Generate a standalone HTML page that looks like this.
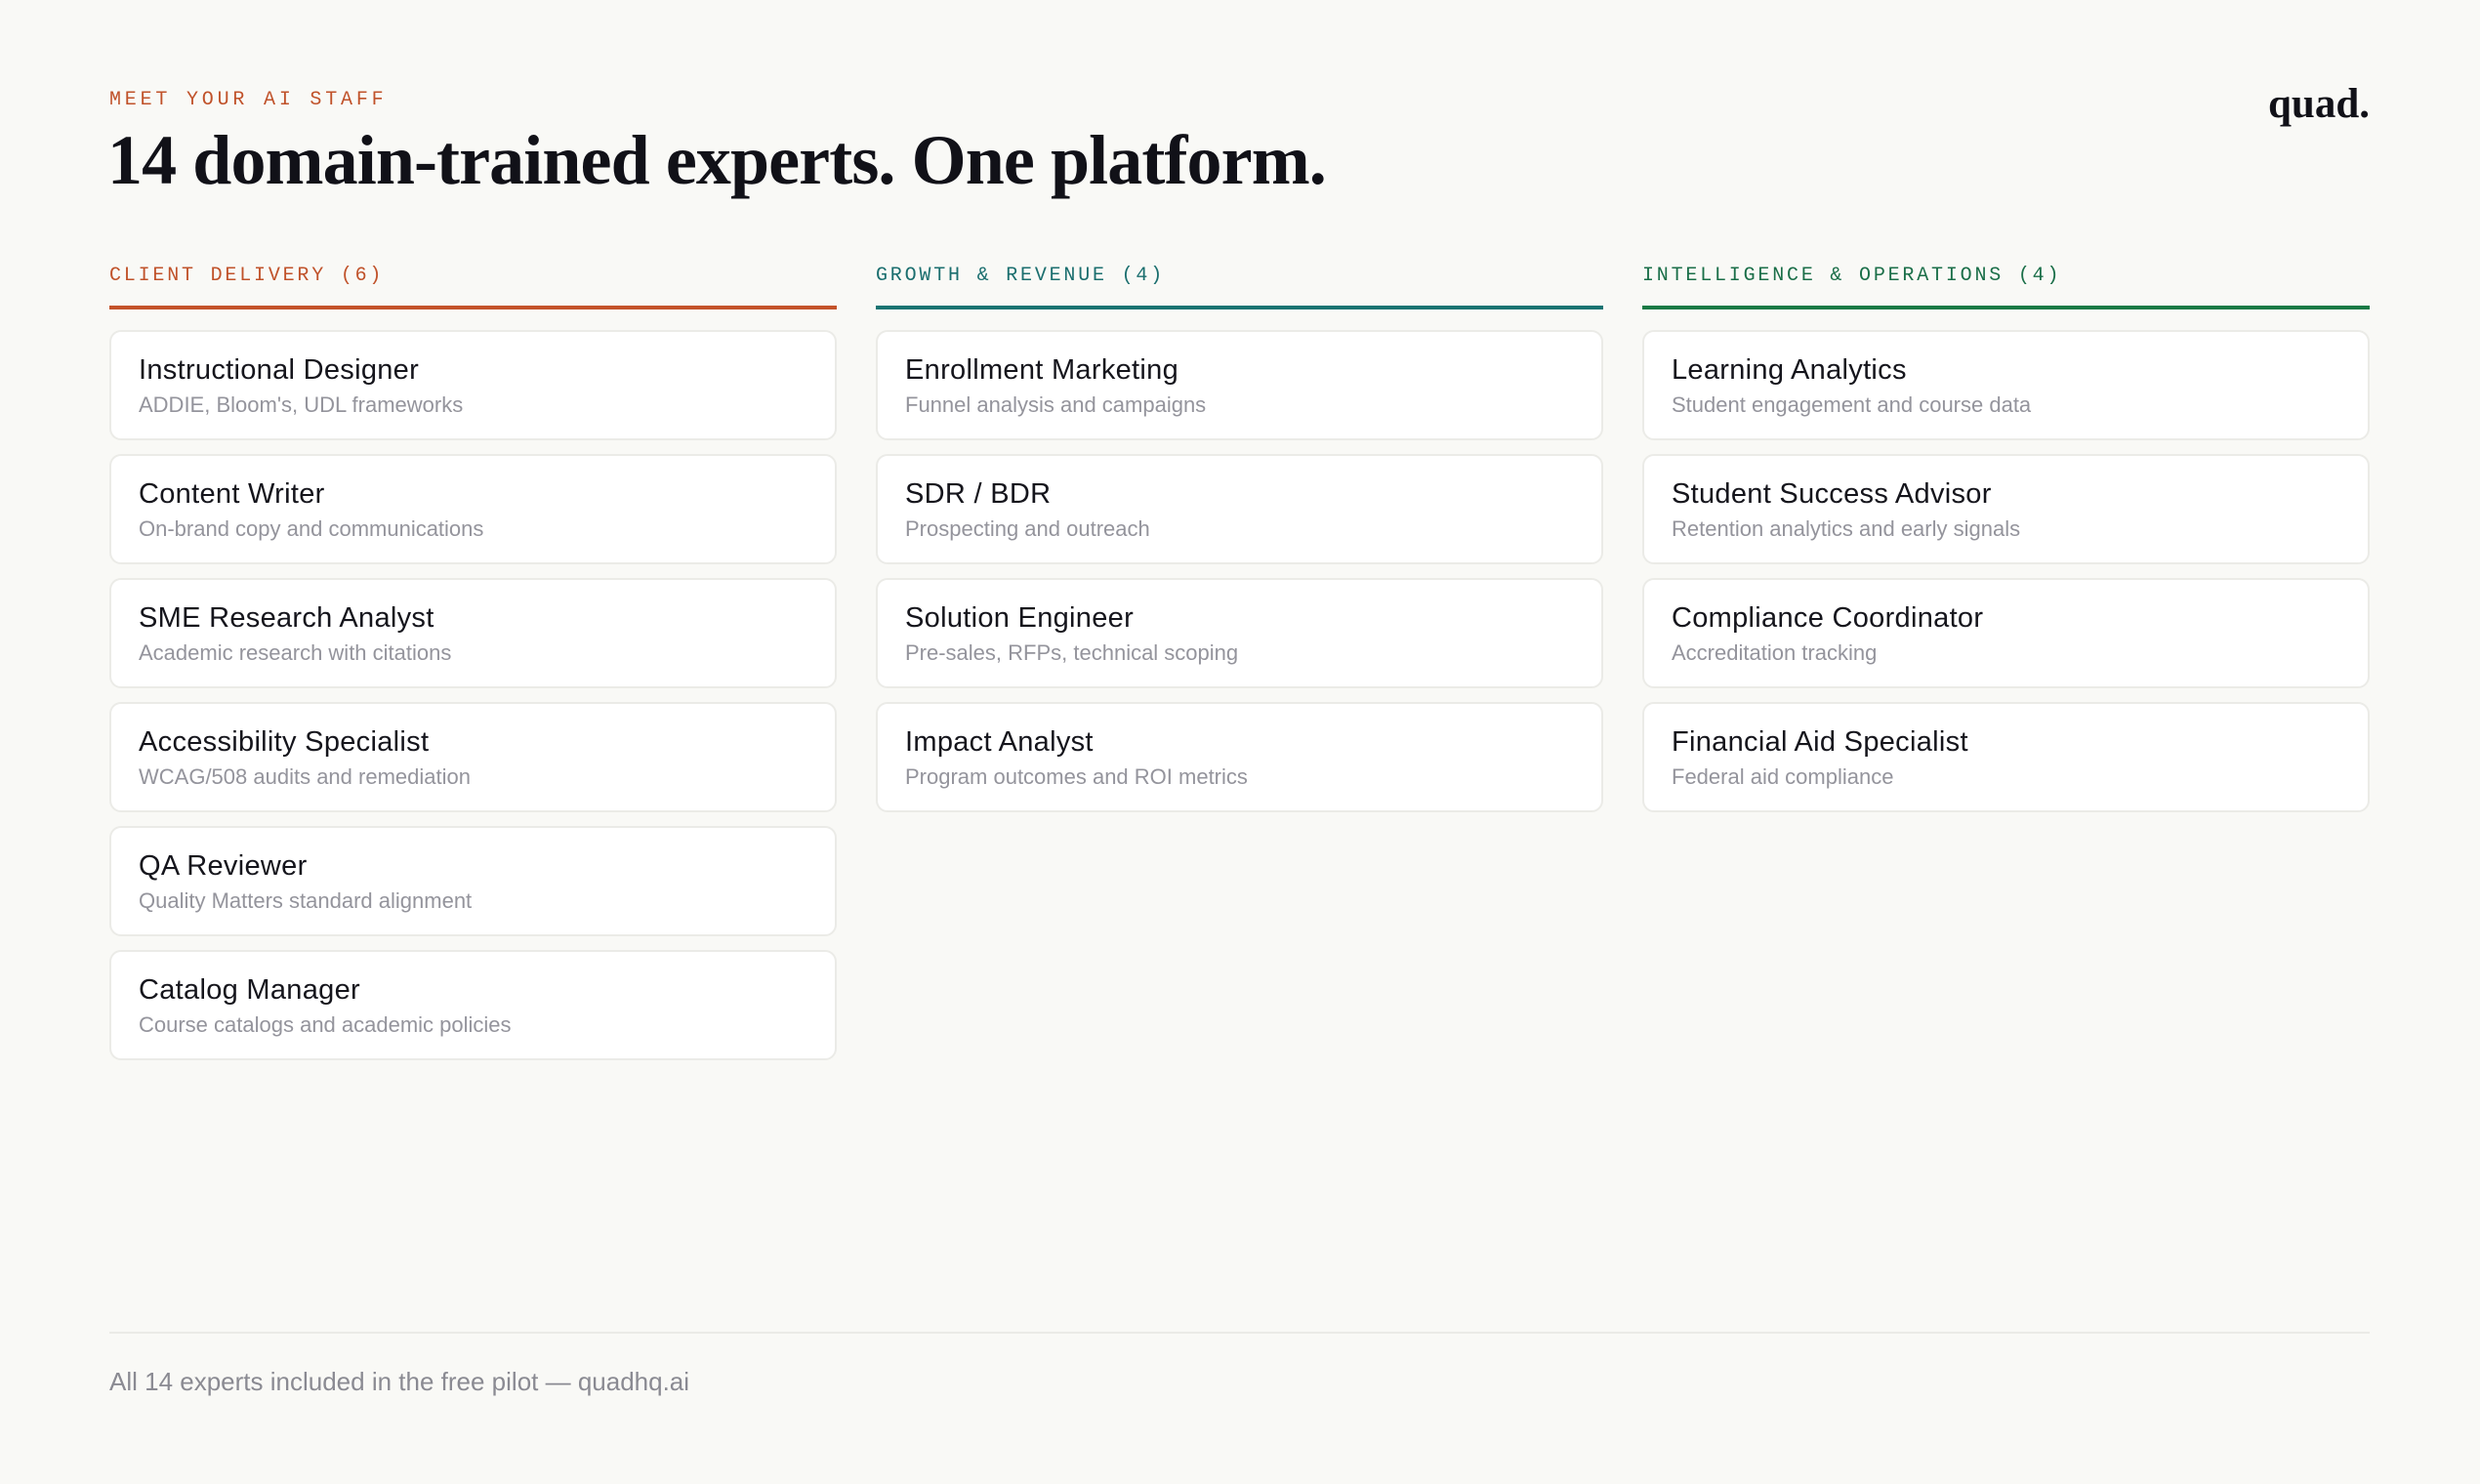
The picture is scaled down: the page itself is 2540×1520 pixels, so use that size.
<!DOCTYPE html>
<html><head><meta charset="utf-8"><style>
*{margin:0;padding:0;box-sizing:border-box}
body{width:2540px;height:1520px;background:#f9f9f6;position:relative;font-family:"Liberation Sans",sans-serif;overflow:hidden}
.eye{position:absolute;left:112px;top:91px;font-family:"Liberation Mono",monospace;font-size:20px;letter-spacing:3.8px;color:#c0522a}
h1{position:absolute;left:110px;top:123px;font-family:"Liberation Serif",serif;font-weight:bold;font-size:72px;color:#111118;letter-spacing:-0.9px}
.logo{position:absolute;right:113px;top:82px;font-family:"Liberation Serif",serif;font-weight:bold;font-size:43px;color:#111118}
.col{position:absolute;top:269px;width:745px}
.ch{font-family:"Liberation Mono",monospace;font-size:20px;letter-spacing:2.8px;height:44px;line-height:28px}
.bar{height:4px;margin-bottom:21px}
.card{height:113px;background:#fff;border:2px solid #ebebe7;border-radius:12px;margin-bottom:14px;padding:22px 28px}
.t{font-size:29px;color:#15151c;line-height:34px;letter-spacing:0.3px}
.s{font-size:22px;color:#94949c;line-height:30px;margin-top:4px}
.fl{position:absolute;left:112px;right:113px;top:1364px;border-top:2px solid #ebebe7}
.ft{position:absolute;left:112px;top:1400px;font-size:26px;color:#8a8a92}
</style></head><body>
<div class="eye">MEET YOUR AI STAFF</div>
<h1>14 domain-trained experts. One platform.</h1>
<div class="logo">quad.</div>
<div class="col" style="left:112px"><div class="ch" style="color:#c0522a">CLIENT DELIVERY (6)</div><div class="bar" style="background:#c4532a"></div>
<div class="card"><div class="t">Instructional Designer</div><div class="s">ADDIE, Bloom's, UDL frameworks</div></div>
<div class="card"><div class="t">Content Writer</div><div class="s">On-brand copy and communications</div></div>
<div class="card"><div class="t">SME Research Analyst</div><div class="s">Academic research with citations</div></div>
<div class="card"><div class="t">Accessibility Specialist</div><div class="s">WCAG/508 audits and remediation</div></div>
<div class="card"><div class="t">QA Reviewer</div><div class="s">Quality Matters standard alignment</div></div>
<div class="card"><div class="t">Catalog Manager</div><div class="s">Course catalogs and academic policies</div></div>
</div>
<div class="col" style="left:897px"><div class="ch" style="color:#1a6e6e">GROWTH &amp; REVENUE (4)</div><div class="bar" style="background:#1a7472"></div>
<div class="card"><div class="t">Enrollment Marketing</div><div class="s">Funnel analysis and campaigns</div></div>
<div class="card"><div class="t">SDR / BDR</div><div class="s">Prospecting and outreach</div></div>
<div class="card"><div class="t">Solution Engineer</div><div class="s">Pre-sales, RFPs, technical scoping</div></div>
<div class="card"><div class="t">Impact Analyst</div><div class="s">Program outcomes and ROI metrics</div></div>
</div>
<div class="col" style="left:1682px"><div class="ch" style="color:#1a6e48">INTELLIGENCE &amp; OPERATIONS (4)</div><div class="bar" style="background:#1a7a45"></div>
<div class="card"><div class="t">Learning Analytics</div><div class="s">Student engagement and course data</div></div>
<div class="card"><div class="t">Student Success Advisor</div><div class="s">Retention analytics and early signals</div></div>
<div class="card"><div class="t">Compliance Coordinator</div><div class="s">Accreditation tracking</div></div>
<div class="card"><div class="t">Financial Aid Specialist</div><div class="s">Federal aid compliance</div></div>
</div>
<div class="fl"></div>
<div class="ft">All 14 experts included in the free pilot — quadhq.ai</div>
</body></html>
